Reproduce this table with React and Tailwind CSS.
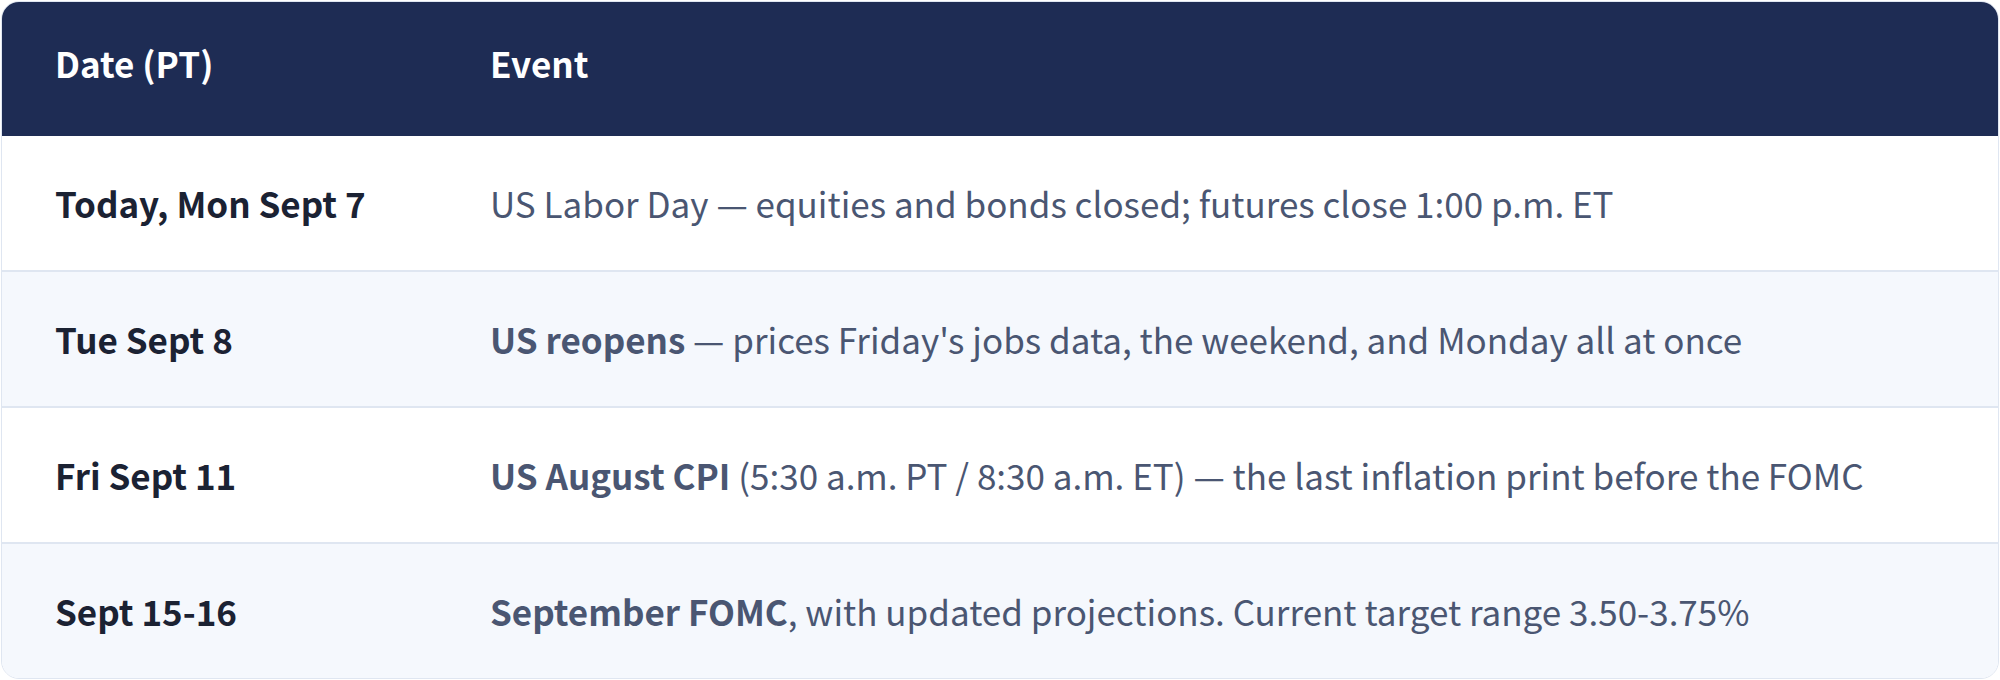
import React from 'react';

const rows = [
  {
    date: 'Today, Mon Sept 7',
    lead: null,
    rest: 'US Labor Day — equities and bonds closed; futures close 1:00 p.m. ET',
  },
  {
    date: 'Tue Sept 8',
    lead: 'US reopens',
    rest: " — prices Friday's jobs data, the weekend, and Monday all at once",
  },
  {
    date: 'Fri Sept 11',
    lead: 'US August CPI',
    rest: ' (5:30 a.m. PT / 8:30 a.m. ET) — the last inflation print before the FOMC',
  },
  {
    date: 'Sept 15-16',
    lead: 'September FOMC',
    rest: ', with updated projections. Current target range 3.50-3.75%',
  },
];

export default function App() {
  return (
    <div
      className="w-[2000px] h-[680px] bg-white p-[1px]"
      style={{ fontFamily: '"Noto Sans CJK KR", "Noto Sans", sans-serif' }}
    >
      <div className="h-full rounded-[18px] border border-[#dfe6f1] overflow-hidden flex flex-col">
        {/* Header */}
        <div className="flex items-center h-[134px] bg-[#1e2c54] text-white text-[35px] font-semibold pb-[12px]">
          <div className="w-[488px] pl-[53px]">Date (PT)</div>
          <div>Event</div>
        </div>

        {/* Body */}
        {rows.map((r, i) => (
          <div
            key={r.date}
            className={`flex-1 flex items-center text-[35px] ${
              i % 2 === 1 ? 'bg-[#f5f8fd]' : 'bg-white'
            } ${i > 0 ? 'border-t-2 border-[#dfe6f1]' : ''}`}
          >
            <div className="w-[488px] pl-[53px] font-bold text-[#1b2233]">{r.date}</div>
            <div className="text-[#4a5672]">
              {r.lead && <span className="font-semibold">{r.lead}</span>}
              {r.rest}
            </div>
          </div>
        ))}
      </div>
    </div>
  );
}
